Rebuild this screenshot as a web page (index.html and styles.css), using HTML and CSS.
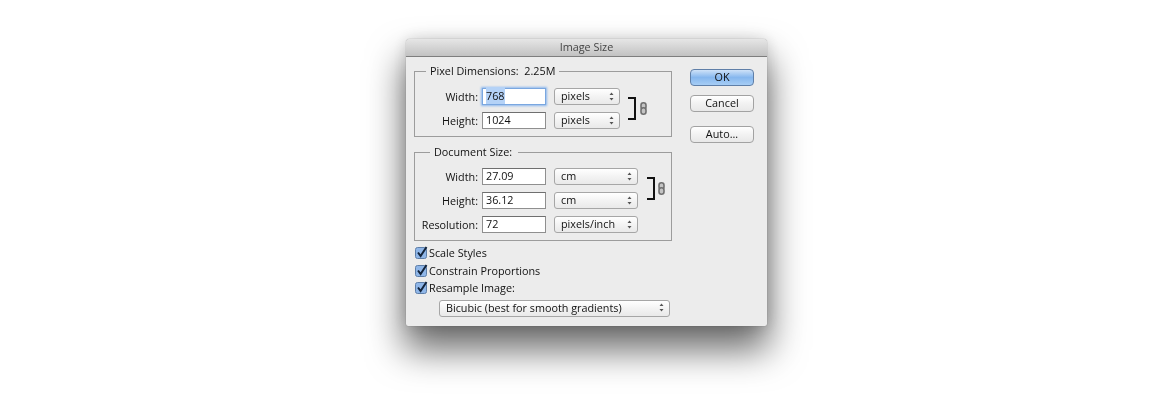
FILE: index.html

```html
<!DOCTYPE html>
<html lang="en">
<head>
   <meta charset="utf-8"/>
   <title>Image Size</title>
   <link rel="stylesheet" href="styles.css">
</head>
<body>
<div class="dialog">
   <div class="titlebar">Image Size</div>
   <div class="content">
      <div class="left">
         <fieldset class="group">
            <legend class="legend-pixel">Pixel Dimensions:&nbsp; 2.25M</legend>
            <div class="rows rows-pixel">
               <label class="lbl">Width:</label>
               <div class="field focused"><span class="sel">768</span></div>
               <div class="popup">pixels<svg class="arrows" width="7" height="11" viewBox="0 0 7 11"><path d="M3.5 1.5 5.5 4h-4zM3.5 9.5 1.5 7h4z"/></svg></div>
               <div class="link">
                  <div class="bracket"></div>
                  <svg class="chain" width="7" height="13" viewBox="0 0 7 13"><rect x="1" y="0.8" width="5" height="6.4" rx="2.4"/><rect x="1" y="5.8" width="5" height="6.4" rx="2.4"/></svg>
               </div>
               <label class="lbl">Height:</label>
               <div class="field">1024</div>
               <div class="popup">pixels<svg class="arrows" width="7" height="11" viewBox="0 0 7 11"><path d="M3.5 1.5 5.5 4h-4zM3.5 9.5 1.5 7h4z"/></svg></div>
            </div>
         </fieldset>
         <fieldset class="group group-doc">
            <legend class="legend-doc">Document Size:</legend>
            <div class="rows rows-doc">
               <label class="lbl">Width:</label>
               <div class="field">27.09</div>
               <div class="popup">cm<svg class="arrows" width="7" height="11" viewBox="0 0 7 11"><path d="M3.5 1.5 5.5 4h-4zM3.5 9.5 1.5 7h4z"/></svg></div>
               <div class="link">
                  <div class="bracket"></div>
                  <svg class="chain" width="7" height="13" viewBox="0 0 7 13"><rect x="1" y="0.8" width="5" height="6.4" rx="2.4"/><rect x="1" y="5.8" width="5" height="6.4" rx="2.4"/></svg>
               </div>
               <label class="lbl">Height:</label>
               <div class="field">36.12</div>
               <div class="popup">cm<svg class="arrows" width="7" height="11" viewBox="0 0 7 11"><path d="M3.5 1.5 5.5 4h-4zM3.5 9.5 1.5 7h4z"/></svg></div>
               <label class="lbl">Resolution:</label>
               <div class="field">72</div>
               <div class="popup">pixels/inch<svg class="arrows" width="7" height="11" viewBox="0 0 7 11"><path d="M3.5 1.5 5.5 4h-4zM3.5 9.5 1.5 7h4z"/></svg></div>
            </div>
         </fieldset>
         <div class="checks">
            <div class="check"><svg class="box" width="13" height="13" viewBox="0 0 13 13"><rect class="box-bg" x="0.5" y="1.5" width="11" height="11" rx="2"/><path class="box-tick" d="M3 6.5 5.6 10 11.5 1"/></svg>Scale Styles</div>
            <div class="check"><svg class="box" width="13" height="13" viewBox="0 0 13 13"><rect class="box-bg" x="0.5" y="1.5" width="11" height="11" rx="2"/><path class="box-tick" d="M3 6.5 5.6 10 11.5 1"/></svg>Constrain Proportions</div>
            <div class="check"><svg class="box" width="13" height="13" viewBox="0 0 13 13"><rect class="box-bg" x="0.5" y="1.5" width="11" height="11" rx="2"/><path class="box-tick" d="M3 6.5 5.6 10 11.5 1"/></svg>Resample Image:</div>
         </div>
         <div class="popup popup-wide">Bicubic (best for smooth gradients)<svg class="arrows" width="7" height="11" viewBox="0 0 7 11"><path d="M3.5 1.5 5.5 4h-4zM3.5 9.5 1.5 7h4z"/></svg></div>
      </div>
      <div class="buttons">
         <div class="btn btn-ok">OK</div>
         <div class="btn">Cancel</div>
         <div class="btn btn-auto">Auto...</div>
      </div>
   </div>
</div>
</body>
</html>
```

FILE: styles.css

```css
/* page */
html, body {
   margin: 0;
   background: #fff;
}
body {
   height: 400px;
   overflow: hidden;
   font-family: "Open Sans", sans-serif;
   font-size: 10.8px;
   color: #111;
}

/* window */
.dialog {
   box-sizing: border-box;
   width: 361px;
   height: 287px;
   margin: 39px 0 0 406px;
   background: #ececec;
   border-radius: 4px 4px 2px 2px;
   box-shadow: 0 0 1px rgba(70, 70, 70, .7), 0 0 16px rgba(0, 0, 0, .14), 0 22px 36px 2px rgba(0, 0, 0, .58);
   filter: blur(.3px);
}
.titlebar {
   height: 17px;
   line-height: 16px;
   text-align: center;
   color: #444;
   background: linear-gradient(#e6e6e6, #c2c2c2);
   border-bottom: 1px solid #7e7e7e;
   border-radius: 4px 4px 0 0;
}
.content {
   display: flex;
   gap: 18px;
   padding: 7px 0 0 8px;
}
.left {
   width: 258px;
}

/* groups */
.group {
   margin: 0;
   padding: 10px 0 7px;
   border: 1px solid #9c9c9c;
   min-width: 0;
}
.group-doc {
   margin-top: 8px;
   padding-top: 9px;
}
legend {
   height: 14px;
   line-height: 14px;
   padding: 0 4px;
}
.legend-pixel { margin-left: 11px; }
.legend-doc { margin-left: 15px; padding-right: 6px; }

.rows {
   display: grid;
   grid-template-rows: repeat(auto-fill, 17px);
   row-gap: 7px;
   align-items: center;
}
.rows-pixel { grid-template-columns: 63px 64px 70px auto; column-gap: 4px; }
.rows-doc { grid-template-columns: 63px 64px 88px auto; column-gap: 4px; }
.rows-doc .link { margin-left: 5px; gap: 3px; }

.lbl {
   text-align: right;
   white-space: nowrap;
   line-height: 15px;
}
.field {
   box-sizing: border-box;
   height: 17px;
   line-height: 14px;
   padding-left: 3px;
   background: #fff;
   border: 1px solid #8f8f8f;
   border-top-color: #6f6f6f;
}
.focused {
   border-color: #7aa7e0;
   box-shadow: 0 0 2px 1px #8db8ee;
}
.sel {
   background: #b4d2f7;
   padding: 1px 0;
}
.popup {
   box-sizing: border-box;
   display: flex;
   align-items: center;
   justify-content: space-between;
   height: 17px;
   line-height: 14px;
   margin-left: 4px;
   padding: 0 4px 1px 6px;
   background: linear-gradient(#fff, #f3f3f3 50%, #e9e9e9);
   border: 1px solid #a6a6a6;
   border-radius: 3px;
}
.arrows {
   fill: #555;
}
.popup-wide {
   width: 231px;
   margin: 5px 0 0 25px;
}

/* constrain link */
.link {
   grid-column: 4;
   grid-row: 1 / 3;
   display: flex;
   align-items: center;
   gap: 4px;
   margin-left: 4px;
}
.bracket {
   box-sizing: border-box;
   width: 8px;
   height: 23px;
   border: 2px solid #111;
   border-left: 0;
}
.chain {
   fill: #c4c4c4;
   stroke: #707070;
   stroke-width: 1.6;
}

/* checkboxes */
.checks {
   display: flex;
   flex-direction: column;
   gap: 4px;
   margin-top: 5px;
}
.check {
   display: flex;
   align-items: center;
   gap: 1px;
   height: 13.5px;
   margin-left: 1px;
}
.box {
   flex: none;
   overflow: visible;
}
.box-bg {
   fill: #8fb6e8;
   stroke: #5d7ea8;
}
.box-tick {
   fill: none;
   stroke: #12233a;
   stroke-width: 2;
}

/* buttons */
.buttons {
   display: flex;
   flex-direction: column;
   gap: 9px;
   width: 64px;
   padding-top: 5px;
}
.btn {
   box-sizing: border-box;
   height: 17px;
   line-height: 14px;
   text-align: center;
   background: linear-gradient(#fff, #f2f2f2 50%, #e8e8e8);
   border: 1px solid #a2a2a2;
   border-radius: 4px;
}
.btn-ok {
   background: linear-gradient(#cfe2f8, #86b7ee 50%, #a6cdf5);
   border-color: #5f7fa8;
}
.btn-auto {
   margin-top: 5px;
}
```
